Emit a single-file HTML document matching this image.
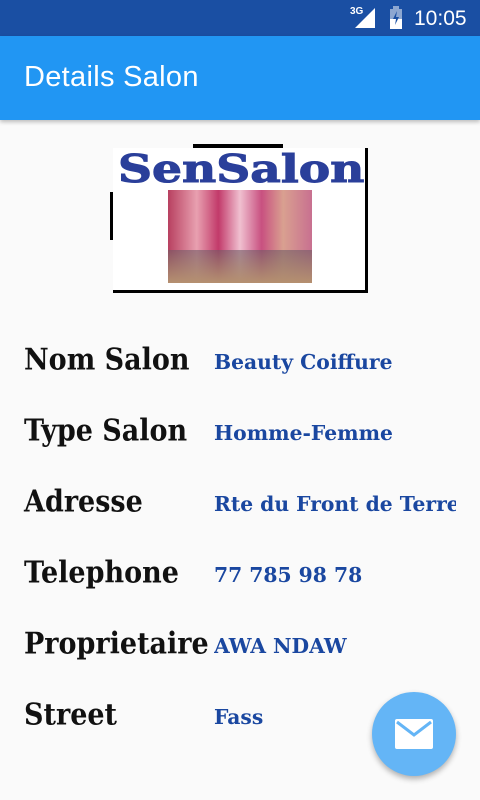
<!DOCTYPE html>
<html><head><meta charset="utf-8"><style>
body{margin:0;width:480px;height:800px;background:#fafafa;position:relative;overflow:hidden;font-family:"DejaVu Serif",serif}
.sb{position:absolute;top:0;left:0;width:480px;height:36px;background:#1a4fa3}
.ab{position:absolute;top:36px;left:0;width:480px;height:84px;background:#2196f3;box-shadow:0 2px 4px rgba(0,0,0,.25)}
.ab span{position:absolute;left:24px;top:25px;color:#fff;font:29px "Liberation Sans",sans-serif;letter-spacing:.3px}
.l{position:absolute;left:24px;font-weight:bold;font-size:27px;color:#111;white-space:nowrap;transform:scaleY(1.1);transform-origin:left top}
.v{position:absolute;left:214px;font-weight:bold;font-size:20.3px;color:#1a47a0;white-space:nowrap;width:242px;overflow:hidden}
</style></head><body>
<div class="sb">
<span style="position:absolute;left:350px;top:6px;color:#fff;font:bold 10px 'Liberation Sans',sans-serif">3G</span>
<svg style="position:absolute;left:355px;top:8px" width="22" height="20"><polygon points="20,0 20,20 0,20" fill="#fff"/></svg>
<svg style="position:absolute;left:388px;top:6px" width="16" height="24"><rect x="2" y="3" width="12" height="20" fill="#fff" opacity=".5"/><rect x="5" y="0" width="6" height="3" fill="#fff" opacity=".5"/><rect x="2" y="13" width="12" height="10" fill="#fff"/><path d="M9 5 L5 13 H8 L7 19 L11 11 H8Z" fill="#1a4fa3"/></svg>
<span style="position:absolute;left:414px;top:7px;color:#fff;font:21px 'Liberation Sans',sans-serif">10:05</span>
</div>
<div class="ab"><span>Details Salon</span></div>
<div style="position:absolute;left:193px;top:144px;width:90px;height:4px;background:#000"></div>
<div style="position:absolute;left:110px;top:192px;width:4px;height:48px;background:#000"></div>
<div style="position:absolute;left:113px;top:148px;width:252px;height:142px;background:#fff;border-right:3px solid #000;border-bottom:3px solid #000"></div>
<div style="position:absolute;left:118px;top:146px;font:bold 38px 'DejaVu Serif',serif;color:#2a3f9a;transform:scaleX(1.24);transform-origin:left;-webkit-text-stroke:1px #2a3f9a">SenSalon</div>
<div style="position:absolute;left:168px;top:190px;width:144px;height:93px;background:linear-gradient(90deg,#b84060,#e8a0b0 20%,#c23a6a 35%,#f0c0d0 50%,#c85080 65%,#d9a090 80%,#c87090);"></div>
<div style="position:absolute;left:168px;top:250px;width:144px;height:33px;background:linear-gradient(180deg,rgba(110,90,100,.6),#b59070)"></div>
<div class="l" style="top:343px">Nom Salon</div><div class="v" style="top:350px">Beauty Coiffure</div>
<div class="l" style="top:414px">Type Salon</div><div class="v" style="top:421px">Homme-Femme</div>
<div class="l" style="top:485px">Adresse</div><div class="v" style="top:492px">Rte du Front de Terre</div>
<div class="l" style="top:556px">Telephone</div><div class="v" style="top:563px">77 785 98 78</div>
<div class="l" style="top:627px">Proprietaire</div><div class="v" style="top:634px">AWA NDAW</div>
<div class="l" style="top:698px">Street</div><div class="v" style="top:705px">Fass</div>
<div style="position:absolute;left:372px;top:692px;width:84px;height:84px;border-radius:50%;background:#64b5f6;box-shadow:0 3px 6px rgba(0,0,0,.3)"></div>
<svg style="position:absolute;left:395px;top:719px" width="38" height="30"><rect x="0" y="0" width="38" height="30" rx="2" fill="#fff"/><path d="M2 3 L19 16 L36 3" stroke="#64b5f6" stroke-width="3" fill="none"/></svg>
</body></html>
